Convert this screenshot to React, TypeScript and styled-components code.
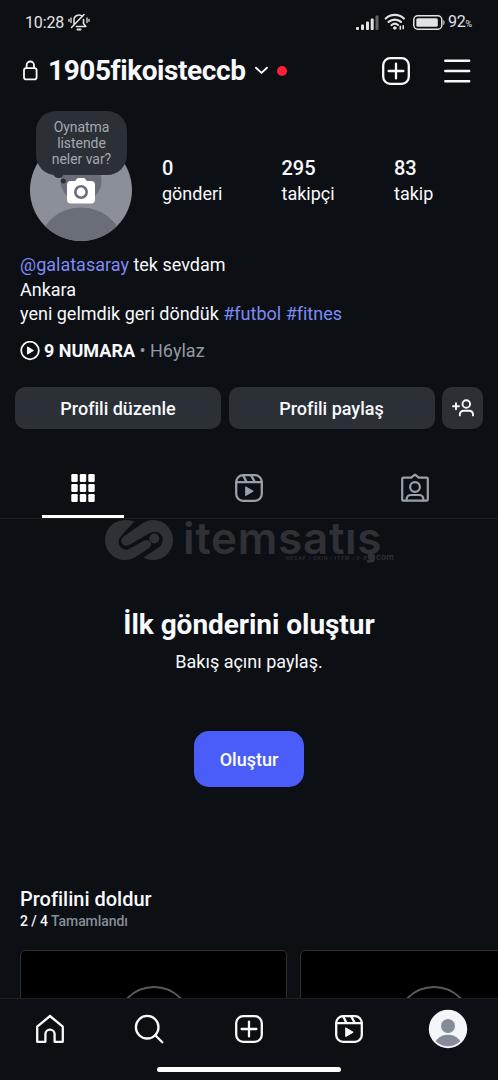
import React from "react";
import styled, { createGlobalStyle } from "styled-components";

const Global = createGlobalStyle`
  * { box-sizing: border-box; }
  html, body { margin: 0; padding: 0; background: #0c0f14; }
  svg { display: block; flex: none; }
`;

const Screen = styled.div`
  width: 498px;
  height: 1080px;
  overflow: hidden;
  display: flex;
  flex-direction: column;
  background: #0c0f14;
  color: #f8f9fb;
  font-family: Roboto, "Noto Sans", sans-serif;
  font-variant-ligatures: none;
`;

const StatusBar = styled.div`
  height: 44px;
  flex: none;
  display: flex;
  align-items: center;
  padding: 0 25px 0 25px;
  color: #e2e3e4;
`;
const Clock = styled.span`
  font-size: 16px;
  line-height: 20px;
  padding-top: 1px;
  font-weight: 400;
  letter-spacing: -0.15px;
  width: 43px;
  white-space: nowrap;
`;
const StatusIcons = styled.div`
  margin-left: auto;
  display: flex;
  align-items: center;
`;
const Percent = styled.span`
  font-size: 16px;
  font-weight: 400;
  line-height: 20px;
  padding-top: 1px;
  margin-left: 3px;
  width: 25px;
  letter-spacing: -0.2px;
  white-space: nowrap;
  small { font-size: 9px; }
`;

const Header = styled.header`
  height: 53px;
  flex: none;
  display: flex;
  align-items: center;
  padding: 0 27px 0 22px;
`;
const Username = styled.h1`
  margin: 0 9px 0 9px;
  width: 198px;
  font-size: 28px;
  line-height: 34px;
  font-weight: 700;
  letter-spacing: -0.42px;
  white-space: nowrap;
`;
const Dot = styled.span`
  width: 10px;
  height: 10px;
  border-radius: 50%;
  background: #ff1f37;
  margin-left: 9px;
`;
const HeaderActions = styled.div`
  margin-left: auto;
  display: flex;
  align-items: center;
  gap: 33px;
`;

const ProfileRow = styled.section`
  height: 145px;
  flex: none;
  display: flex;
  padding: 42px 0 0 30px;
`;
const Avatar = styled.div`
  position: relative;
  width: 102px;
  height: 102px;
  flex: none;
`;
const NoteBubble = styled.div`
  position: absolute;
  left: 6px;
  top: -28px;
  width: 91px;
  height: 64px;
  border-radius: 20px;
  background: #2b2f36;
  color: #a2a8b2;
  font-size: 14px;
  line-height: 16px;
  padding-top: 8px;
  text-align: center;
  letter-spacing: -0.05px;
`;
const Camera = styled.div`
  position: absolute;
  left: 37px;
  top: 38px;
`;
const Stats = styled.div`
  display: grid;
  grid-template-columns: 119.5px 112.5px 80px;
  margin-left: 30px;
  padding-top: 17px;
`;
const Stat = styled.div`
  line-height: 25.5px;
  font-size: 18px;
  strong {
    display: block;
    font-weight: 500;
    font-size: 20px;
    line-height: 25px;
  }
`;

const Bio = styled.section`
  height: 145px;
  flex: none;
  padding: 11px 20px 0;
  font-size: 18px;
  line-height: 24.5px;
`;
const Link = styled.a`
  color: #7e8bf4;
`;
const Music = styled.div`
  display: flex;
  align-items: center;
  gap: 4px;
  margin-top: 12px;
  color: #9299a4;
  white-space: pre;
  b { color: #f8f9fb; font-weight: 700; }
`;

const Actions = styled.div`
  display: grid;
  grid-template-columns: 206px 206px 41px;
  gap: 7.5px;
  padding-left: 15px;
  height: 42px;
  flex: none;
`;
const ActionButton = styled.button`
  border: 0;
  border-radius: 10px;
  background: #2b2f36;
  color: #f8f9fb;
  font: 500 18px/22px Roboto, sans-serif;
  font-variant-ligatures: none;
  padding: 2px 0 0;
  display: flex;
  align-items: center;
  justify-content: center;
`;

const Tabs = styled.nav`
  height: 90px;
  flex: none;
  display: grid;
  grid-template-columns: repeat(3, 1fr);
  border-bottom: 1px solid #1b1f24;
`;
const Tab = styled.div<{ $active?: boolean }>`
  display: flex;
  justify-content: center;
  padding-top: 44px;
  color: ${(p) => (p.$active ? "#ffffff" : "#98a0aa")};
  position: relative;
  &::after {
    content: "";
    display: ${(p) => (p.$active ? "block" : "none")};
    position: absolute;
    left: 42px;
    bottom: 0;
    width: 82px;
    height: 3px;
    background: #fff;
  }
`;

const Watermark = styled.div`
  position: relative;
  height: 48px;
  flex: none;
  display: flex;
  padding-left: 105px;
  color: #303136;
`;
const Brand = styled.span`
  font-family: Inter, sans-serif;
  font-weight: 600;
  font-size: 44px;
  line-height: 44px;
  letter-spacing: 0.7px;
  margin: -3px 0 0 9px;
  white-space: nowrap;
`;
const Tagline = styled.span`
  position: absolute;
  left: 286px;
  top: 35px;
  font: 600 5px/8px Inter, sans-serif;
  letter-spacing: 0.75px;
  white-space: nowrap;
`;
const DotCom = styled.span`
  position: absolute;
  left: 376px;
  top: 33px;
  font: 600 8.5px/10px Inter, sans-serif;
  white-space: nowrap;
`;
const BrandDot = styled.span`
  position: absolute;
  left: 368px;
  top: 34px;
  width: 7px;
  height: 7px;
  border-radius: 50%;
  background: #303136;
`;

const Empty = styled.section`
  height: 311px;
  flex: none;
  display: flex;
  flex-direction: column;
  align-items: center;
  padding-top: 41px;
  h2 {
    margin: 0;
    font-size: 28px;
    line-height: 34px;
    font-weight: 700;
    letter-spacing: -0.05px;
    white-space: nowrap;
  }
  p {
    margin: 9px 0 0;
    font-size: 18px;
    line-height: 22px;
  }
`;
const Primary = styled.button`
  margin-top: 58px;
  width: 110px;
  height: 56px;
  border: 0;
  border-radius: 15px;
  background: #4a5df9;
  color: #fff;
  font: 500 18px/22px Roboto, sans-serif;
  padding: 2px 0 0;
`;

const Complete = styled.section`
  flex: 1;
  min-height: 0;
  overflow: hidden;
  padding: 8px 0 0 20px;
  h3 {
    margin: 0;
    font-size: 20px;
    line-height: 26px;
    font-weight: 500;
  }
  p {
    margin: -1px 0 0;
    font-size: 14px;
    line-height: 20px;
    font-weight: 500;
    letter-spacing: -0.08px;
    color: #878e99;
  }
  p b { color: #f8f9fb; font-weight: 500; }
`;
const Cards = styled.div`
  display: flex;
  gap: 13px;
  margin-top: 19px;
`;
const Card = styled.div`
  width: 267px;
  height: 200px;
  flex: none;
  display: flex;
  justify-content: center;
  padding-top: 35px;
  border: 1px solid #2b2e32;
  border-radius: 5px;
  background: #000;
`;
const Ring = styled.div`
  width: 76px;
  height: 76px;
  border: 2px solid #58595b;
  border-radius: 50%;
`;

const BottomBar = styled.nav`
  height: 82px;
  flex: none;
  border-top: 1px solid #1b1f24;
  display: flex;
  flex-direction: column;
  align-items: center;
  background: #0c0f14;
`;
const NavRow = styled.div`
  width: 100%;
  height: 60px;
  display: grid;
  grid-template-columns: repeat(5, 1fr);
  align-items: center;
  justify-items: center;
`;
const HomeIndicator = styled.div`
  margin-top: 8px;
  width: 184px;
  height: 5px;
  border-radius: 3px;
  background: #fff;
`;

const stroke = {
  fill: "none",
  stroke: "currentColor",
  strokeLinecap: "round" as const,
  strokeLinejoin: "round" as const,
};

const MutedBell = () => (
  <svg width="22" height="20" viewBox="0 0 22 20" {...stroke} strokeWidth="1.6">
    <path d="M6 12V8.5a5 5 0 0 1 8.5-4M15.5 7.5v4l2.3 3H8.5M16 2.5 3.5 15.5" />
    <path d="M9.5 17.5h3" strokeWidth="2" />
    <path d="M3 6v4.5M1 7.3v2M19 6v4.5M21 7.3v2" strokeWidth="1.3" />
  </svg>
);
const Signal = () => (
  <svg width="23" height="15" viewBox="0 0 23 15" fill="currentColor">
    <rect x="0" y="12" width="3" height="3" rx="1" />
    <rect x="5" y="9.5" width="3" height="5.5" rx="1" />
    <rect x="10" y="6.5" width="3" height="8.5" rx="1" />
    <rect x="14.7" y="3.5" width="3" height="11.5" rx="1" />
    <rect x="19.5" y="0.5" width="3" height="14.5" rx="1" opacity=".4" />
  </svg>
);
const Wifi = () => (
  <svg width="22" height="18" viewBox="0 0 22 18" {...stroke} strokeWidth="2.2" style={{ marginLeft: 5 }}>
    <path d="M1.7 5.5a13.5 13.5 0 0 1 18.2 0M4.6 8.9a9.3 9.3 0 0 1 12.4 0M7.6 12a5 5 0 0 1 6.4 0" />
    <circle cx="10.8" cy="15" r="1.3" fill="currentColor" strokeWidth="1" />
    <path d="M16.3 13.3v2.8M19.2 12.8v2.8" strokeWidth="1.6" />
  </svg>
);
const Battery = () => (
  <svg width="32" height="15" viewBox="0 0 32 15" style={{ marginLeft: 7 }}>
    <rect x="0.8" y="0.8" width="28" height="13.4" rx="4" fill="none" stroke="currentColor" strokeWidth="1.5" />
    <rect x="3.3" y="3.3" width="21.5" height="8.4" rx="1.5" fill="currentColor" />
    <path d="M30.3 5q1.2 0 1.2 2.5t-1.2 2.5z" fill="currentColor" />
  </svg>
);
const Lock = () => (
  <svg width="17" height="22" viewBox="0 0 17 22" {...stroke} strokeWidth="1.8">
    <rect x="2" y="8.2" width="12.6" height="11.2" rx="2.2" />
    <path d="M4.6 8.2V5.2a3.7 3.7 0 0 1 7.4 0v3" />
  </svg>
);
const PlusSquare = () => (
  <svg width="30" height="30" viewBox="0 0 30 30" {...stroke} strokeWidth="2.3">
    <rect x="2.2" y="2.2" width="25.6" height="25.6" rx="7" />
    <path d="M15 7.6v14.8M7.6 15h14.8" />
  </svg>
);
const ReelsIcon = () => (
  <svg width="30" height="30" viewBox="0 0 30 30" {...stroke} strokeWidth="2.3">
    <rect x="2.2" y="2.2" width="25.6" height="25.6" rx="6.8" />
    <path d="M2.5 9.2h25M9.4 2.8l3.1 6.2M17.2 2.4l3.6 6.6" />
    <path d="m12 14 7.2 4.2-7.2 4.2z" fill="currentColor" strokeWidth="1" />
  </svg>
);

export default function App() {
  return (
    <>
      <Global />
      <Screen>
        <StatusBar>
          <Clock>10:28</Clock>
          <MutedBell />
          <StatusIcons>
            <Signal />
            <Wifi />
            <Battery />
            <Percent>92<small>%</small></Percent>
          </StatusIcons>
        </StatusBar>

        <Header>
          <Lock />
          <Username>1905fikoisteccb</Username>
          <svg width="13" height="9" viewBox="0 0 13 9" {...stroke} strokeWidth="1.9">
            <path d="m1 1.7 5.5 5.2L12 1.7" />
          </svg>
          <Dot />
          <HeaderActions>
            <PlusSquare />
            <svg width="27" height="26" viewBox="0 0 27 26" {...stroke} strokeWidth="2.4">
              <path d="M1.3 2.8h23.9M1.3 13h23.9M1.3 23.2h23.9" />
            </svg>
          </HeaderActions>
        </Header>

        <ProfileRow>
          <Avatar>
            <svg width="102" height="102" viewBox="0 0 102 102">
              <defs>
                <clipPath id="face"><circle cx="51" cy="51" r="51" /></clipPath>
              </defs>
              <g clipPath="url(#face)">
                <rect width="102" height="102" fill="#8b8f98" />
                <circle cx="51" cy="42" r="20.5" fill="#696e78" />
                <circle cx="51" cy="112.5" r="44" fill="#696e78" />
              </g>
              <circle cx="28.5" cy="33.5" r="5.5" fill="#2b2f36" />
              <circle cx="33.3" cy="42" r="2.5" fill="#2b2f36" />
            </svg>
            <NoteBubble>Oynatma<br />listende<br />neler var?</NoteBubble>
            <Camera>
              <svg width="28" height="28" viewBox="0 0 28 28">
                <path d="M4 4h4.2l1.5-2Q10.3 1 11.5 1h5q1.2 0 1.8 1l1.5 2H24q4 0 4 4v14.5q0 4-4 4H4q-4 0-4-4V8q0-4 4-4z" fill="#fff" />
                <circle cx="14" cy="15" r="5.7" fill="none" stroke="#696e78" strokeWidth="2.6" />
              </svg>
            </Camera>
          </Avatar>
          <Stats>
            <Stat><strong>0</strong>gönderi</Stat>
            <Stat><strong>295</strong>takipçi</Stat>
            <Stat><strong>83</strong>takip</Stat>
          </Stats>
        </ProfileRow>

        <Bio>
          <div><Link>@galatasaray</Link> tek sevdam</div>
          <div>Ankara</div>
          <div>yeni gelmdik geri döndük <Link>#futbol</Link> <Link>#fitnes</Link></div>
          <Music>
            <svg width="20" height="20" viewBox="0 0 20 20" color="#f8f9fb" {...stroke} strokeWidth="1.8">
              <circle cx="10" cy="9.5" r="8.8" />
              <path d="m7.8 6.1 5.6 3.4-5.6 3.4z" fill="currentColor" strokeWidth="1" />
            </svg>
            <span><b>9 NUMARA</b> • H6ylaz</span>
          </Music>
        </Bio>

        <Actions>
          <ActionButton>Profili düzenle</ActionButton>
          <ActionButton>Profili paylaş</ActionButton>
          <ActionButton aria-label="Kişi ekle">
            <svg width="22" height="20" viewBox="0 0 22 20" {...stroke} strokeWidth="1.9">
              <circle cx="14.3" cy="5" r="3.8" />
              <path d="M7.8 16.4v-.6q0-4 4-4h5.2q4 0 4 4v.6M1 7.3h6M4 4.3v6" />
            </svg>
          </ActionButton>
        </Actions>

        <Tabs>
          <Tab $active>
            <svg width="24" height="30" viewBox="0 0 24 30" fill="currentColor">
              {[1, 11, 21].map((y) =>
                [0.3, 8.8, 17.3].map((x) => (
                  <rect key={`${x}-${y}`} x={x} y={y} width="6.4" height="8" rx="1.2" />
                )),
              )}
            </svg>
          </Tab>
          <Tab><ReelsIcon /></Tab>
          <Tab>
            <svg width="30" height="30" viewBox="0 0 30 30" {...stroke} strokeWidth="2.2">
              <path d="M3.4 4.6h7.8L15 1.6l3.8 3h7.8q1.2 0 1.2 1.2v20.7q0 1.2-1.2 1.2H3.4q-1.2 0-1.2-1.2V5.8q0-1.2 1.2-1.2z" />
              <circle cx="15" cy="14" r="4.9" />
              <path d="M6.6 27.5v-1q0-4.5 4.5-4.5h7.8q4.5 0 4.5 4.5v1" />
            </svg>
          </Tab>
        </Tabs>

        <Watermark>
          <svg width="69" height="42" viewBox="0 0 69 42" fill="currentColor">
            <path d="M29.5 2.3Q24.5 1 20 1a20 20 0 0 0 0 40q6 0 10.500-3L44 29q3.500-3 1.500-6t-6.500-1.500L25 29.500q-5 3-9.500-1.500-4.500-6 1-11.500z" />
            <path d="M38 4Q43 1 48 1a20 20 0 0 1 0 40q-5 0-9.500-2.500L53 29q6-4.500 4.500-11-4-7.500-11.500-4.500L24 26q-4.500 2-7-1.500-2-4 1.500-7z" />
            <circle cx="49.300" cy="19.500" r="5" />
          </svg>
          <Brand>itemsatış</Brand>
          <Tagline>HESAP / SKIN / ITEM / E-PIN</Tagline>
          <BrandDot />
          <DotCom>com</DotCom>
        </Watermark>

        <Empty>
          <h2>İlk gönderini oluştur</h2>
          <p>Bakış açını paylaş.</p>
          <Primary>Oluştur</Primary>
        </Empty>

        <Complete>
          <h3>Profilini doldur</h3>
          <p><b>2 / 4</b> Tamamlandı</p>
          <Cards>
            <Card><Ring /></Card>
            <Card><Ring /></Card>
          </Cards>
        </Complete>

        <BottomBar>
          <NavRow>
            <svg width="30" height="30" viewBox="0 0 30 30" {...stroke} strokeWidth="2.3">
              <path d="M2.2 12.7 15 2l12.8 10.7v15.100h-8.200v-7.500a4.600 4.600 0 0 0-9.200 0v7.500H2.200z" />
            </svg>
            <svg width="30" height="30" viewBox="0 0 30 30" {...stroke} strokeWidth="2.3">
              <circle cx="13.2" cy="13.2" r="11.3" />
              <path d="m21.3 21.3 7 7" />
            </svg>
            <PlusSquare />
            <ReelsIcon />
            <svg width="40" height="40" viewBox="0 0 40 40">
              <defs>
                <clipPath id="me"><circle cx="20" cy="20" r="17.3" /></clipPath>
              </defs>
              <circle cx="20" cy="20" r="19.2" fill="#f3f5f8" />
              <g clipPath="url(#me)" fill="#858b99">
                <circle cx="20" cy="17" r="7" />
                <circle cx="20" cy="41" r="15.3" />
              </g>
            </svg>
          </NavRow>
          <HomeIndicator />
        </BottomBar>
      </Screen>
    </>
  );
}
